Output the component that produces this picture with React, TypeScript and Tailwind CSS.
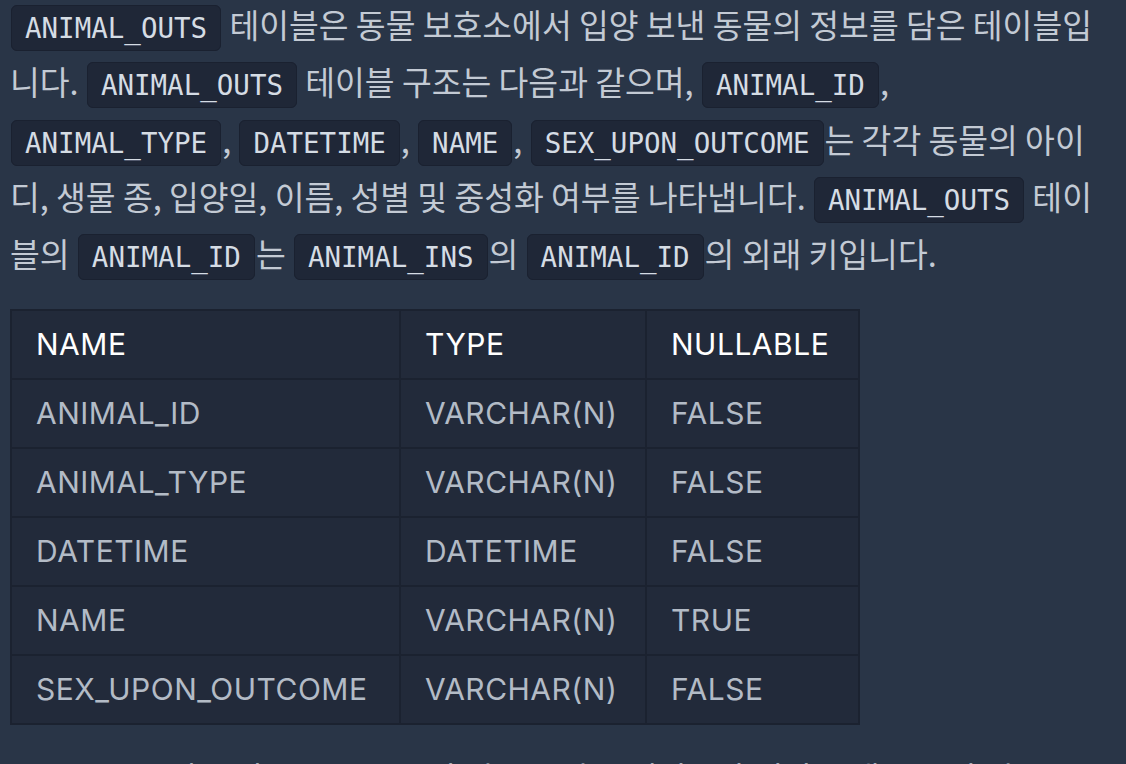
const Code = ({ children }: { children: string }) => (
  <code className="mx-[1px] rounded-[6px] border border-[#1a2130] bg-[#1f2737] px-[13px] py-[6px] font-['DejaVu_Sans_Mono',monospace] text-[27.5px] leading-none text-[#d5dce4]">
    {children}
  </code>
);

const rows = [
  ["ANIMAL_ID", "VARCHAR(N)", "FALSE"],
  ["ANIMAL_TYPE", "VARCHAR(N)", "FALSE"],
  ["DATETIME", "DATETIME", "FALSE"],
  ["NAME", "VARCHAR(N)", "TRUE"],
  ["SEX_UPON_OUTCOME", "VARCHAR(N)", "FALSE"],
];

export default function App() {
  return (
    <div className="flex min-h-screen flex-col items-start bg-[#293547] pl-[10px] pr-[18px] font-['Noto_Sans_CJK_KR',sans-serif] text-[32.4px] text-[#c3cad4]">
      <p className="-mt-[5px] leading-[57.3px]">
        <Code>ANIMAL_OUTS</Code> 테이블은 동물 보호소에서 입양 보낸 동물의 정보를 담은 테이블입니다.{" "}
        <Code>ANIMAL_OUTS</Code> 테이블 구조는 다음과 같으며, <Code>ANIMAL_ID</Code>,{" "}
        <Code>ANIMAL_TYPE</Code>, <Code>DATETIME</Code>, <Code>NAME</Code>,{" "}
        <Code>SEX_UPON_OUTCOME</Code>는 각각 동물의 아이디, 생물 종, 입양일, 이름, 성별 및 중성화 여부를
        나타냅니다. <Code>ANIMAL_OUTS</Code> 테이블의 <Code>ANIMAL_ID</Code>는 <Code>ANIMAL_INS</Code>의{" "}
        <Code>ANIMAL_ID</Code>의 외래 키입니다.
      </p>

      <table className="mt-[28px] table-fixed border-collapse border-2 border-[#1b2230] bg-[#222a3a] font-['Inter',sans-serif] text-[30px] tracking-[0.5px]">
        <thead>
          <tr className="h-[69px]">
            <th className="w-[389px] border-2 border-[#1b2230] px-[24px] text-left font-normal text-white">NAME</th>
            <th className="w-[246px] border-2 border-[#1b2230] px-[24px] text-left font-normal text-white">TYPE</th>
            <th className="w-[213px] border-2 border-[#1b2230] px-[24px] text-left font-normal text-white">NULLABLE</th>
          </tr>
        </thead>
        <tbody>
          {rows.map((r, i) => (
            <tr key={i} className="h-[69px]">
              {r.map((c, j) => (
                <td key={j} className="whitespace-nowrap border-2 border-[#1b2230] px-[24px] text-[#b3bbc6]">
                  {c}
                </td>
              ))}
            </tr>
          ))}
        </tbody>
      </table>

      <p className="mt-[23px] leading-[57.3px]">
        동물 보호소에 들어온 모든 동물의 정보를 담은 테이블과 입양 보낸 동물의 정보를 조회하는 SQL 문을 작성해주세요.
      </p>
    </div>
  );
}
